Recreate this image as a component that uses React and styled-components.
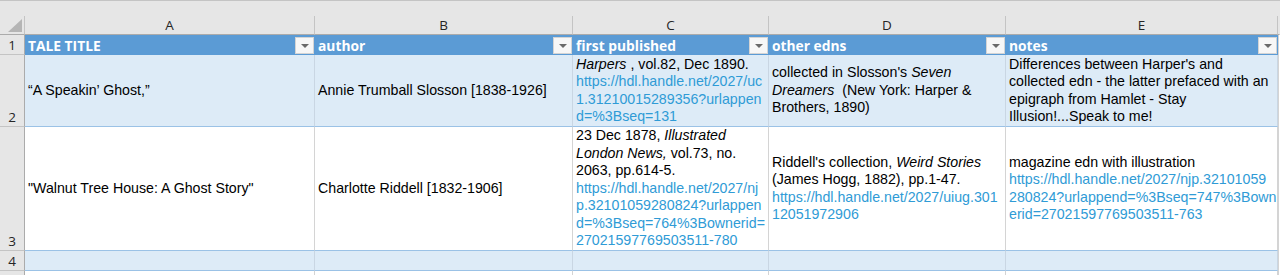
import styled, { createGlobalStyle } from "styled-components";

const GlobalStyle = createGlobalStyle`
  html, body {
    margin: 0;
    padding: 0;
    background: #ffffff;
    overflow: hidden;
  }
`;

const Sheet = styled.div`
  display: grid;
  grid-template-columns: 25px 290px 258px 196px 237px 272px 1fr;
  grid-template-rows: 16px 19px 20px 72px 124px 20px 24px;
  width: 1280px;
  height: 275px;
  overflow: hidden;
  font-family: "Liberation Sans", Arial, sans-serif;
`;

const TopStrip = styled.div`
  grid-column: 1 / -1;
  background: #e6e6e6;
  border-top: 1px solid #c4c4c4;
  box-sizing: border-box;
`;

const Corner = styled.div`
  background: #e6e6e6;
  border-right: 1px solid #c4c4c4;
  border-bottom: 1px solid #ababab;
  box-sizing: border-box;
  display: flex;
  align-items: flex-end;
  justify-content: flex-end;
  padding: 0 2px 2px 0;
`;

const ColHead = styled.div`
  background: #e6e6e6;
  border-right: 1px solid ${(p) => (p.$last ? "#e6e6e6" : "#c4c4c4")};
  border-bottom: 1px solid #ababab;
  box-sizing: border-box;
  display: flex;
  align-items: center;
  justify-content: center;
  font-family: "Open Sans", "Liberation Sans", sans-serif;
  font-size: 13.5px;
  color: #262626;
`;

const RowHead = styled.div`
  background: #e6e6e6;
  border-right: 1px solid #ababab;
  border-bottom: 1px solid #c4c4c4;
  box-sizing: border-box;
  display: flex;
  align-items: flex-end;
  justify-content: center;
  font-family: "Open Sans", "Liberation Sans", sans-serif;
  font-size: 13.5px;
  line-height: 18px;
  color: #262626;
`;

const HeadCell = styled.div`
  background: #5b9bd5;
  color: #ffffff;
  display: flex;
  align-items: center;
  padding-left: 3px;
  font-family: "Open Sans", "Liberation Sans", sans-serif;
  font-weight: 700;
  font-size: 13.8px;
  white-space: nowrap;
  overflow: hidden;
`;

const HeadLabel = styled.span`
  flex: 1;
`;

const FilterButton = styled.div`
  width: 19px;
  height: 17px;
  margin-right: 1px;
  box-sizing: border-box;
  background: #f7f7f7;
  border: 1px solid #d4d4d4;
  display: flex;
  align-items: center;
  justify-content: center;

  &::after {
    content: "";
    border-left: 4px solid transparent;
    border-right: 4px solid transparent;
    border-top: 4px solid #6a6a6a;
    margin-top: 1px;
  }
`;

const Cell = styled.div`
  background: ${(p) => (p.$band ? "#ddebf7" : "#ffffff")};
  border-right: 1px solid ${(p) => (p.$band ? "#c9d6e3" : "#d4d4d4")};
  border-bottom: 1px solid #9bc2e6;
  box-sizing: border-box;
  display: flex;
  flex-direction: column;
  justify-content: center;
  padding: 0 3px;
  font-size: 14.2px;
  line-height: 17.5px;
  color: #000000;
  white-space: nowrap;
  overflow: hidden;
`;

const Filler = styled.div`
  background: #ffffff;
  border-left: 1px solid #d4d4d4;
`;

const Line = styled.span`
  display: block;
  color: ${(p) => (p.$link ? "#2f9bd6" : "#000000")};
`;

const Em = styled.i`
  font-style: italic;
`;

const Triangle = () => (
  <svg width="14" height="13" viewBox="0 0 14 13">
    <polygon points="14,0 14,13 0,13" fill="#b5b5b5" />
  </svg>
);

const columns = ["A", "B", "C", "D", "E"];
const headers = ["TALE TITLE", "author", "first published", "other edns", "notes"];

export default function App() {
  return (
    <>
      <GlobalStyle />
      <Sheet>
        <TopStrip />

        <Corner>
          <Triangle />
        </Corner>
        {columns.map((c) => (
          <ColHead key={c}>{c}</ColHead>
        ))}
        <ColHead $last />

        <RowHead>1</RowHead>
        {headers.map((h) => (
          <HeadCell key={h}>
            <HeadLabel>{h}</HeadLabel>
            <FilterButton />
          </HeadCell>
        ))}
        <Filler />

        <RowHead>2</RowHead>
        <Cell $band>
          <Line>“A Speakin’ Ghost,”</Line>
        </Cell>
        <Cell $band>
          <Line>Annie Trumball Slosson [1838-1926]</Line>
        </Cell>
        <Cell $band>
          <Line>
            <Em>Harpers</Em> , vol.82, Dec 1890.
          </Line>
          <Line $link>https://hdl.handle.net/2027/uc</Line>
          <Line $link>1.31210015289356?urlappen</Line>
          <Line $link>d=%3Bseq=131</Line>
        </Cell>
        <Cell $band>
          <Line>
            collected in Slosson's <Em>Seven</Em>
          </Line>
          <Line>
            <Em>Dreamers</Em>&nbsp; (New York: Harper &amp;
          </Line>
          <Line>Brothers, 1890)</Line>
        </Cell>
        <Cell $band>
          <Line>Differences between Harper's and</Line>
          <Line>collected edn - the latter prefaced with an</Line>
          <Line>epigraph from Hamlet - Stay</Line>
          <Line>Illusion!...Speak to me!</Line>
        </Cell>
        <Filler />

        <RowHead>3</RowHead>
        <Cell>
          <Line>"Walnut Tree House: A Ghost Story"</Line>
        </Cell>
        <Cell>
          <Line>Charlotte Riddell [1832-1906]</Line>
        </Cell>
        <Cell>
          <Line>
            23 Dec 1878, <Em>Illustrated</Em>
          </Line>
          <Line>
            <Em>London News,</Em> vol.73, no.
          </Line>
          <Line>2063, pp.614-5.</Line>
          <Line $link>https://hdl.handle.net/2027/nj</Line>
          <Line $link>p.32101059280824?urlappen</Line>
          <Line $link>d=%3Bseq=764%3Bownerid=</Line>
          <Line $link>27021597769503511-780</Line>
        </Cell>
        <Cell>
          <Line>
            Riddell's collection, <Em>Weird Stories</Em>
          </Line>
          <Line>(James Hogg, 1882), pp.1-47.</Line>
          <Line $link>https://hdl.handle.net/2027/uiug.301</Line>
          <Line $link>12051972906</Line>
        </Cell>
        <Cell>
          <Line>magazine edn with illustration</Line>
          <Line $link>https://hdl.handle.net/2027/njp.32101059</Line>
          <Line $link>280824?urlappend=%3Bseq=747%3Bown</Line>
          <Line $link>erid=27021597769503511-763</Line>
        </Cell>
        <Filler />

        <RowHead>4</RowHead>
        {columns.map((c) => (
          <Cell key={c} $band />
        ))}
        <Filler />

        <RowHead />
        {columns.map((c) => (
          <Cell key={c} />
        ))}
        <Filler />
      </Sheet>
    </>
  );
}
